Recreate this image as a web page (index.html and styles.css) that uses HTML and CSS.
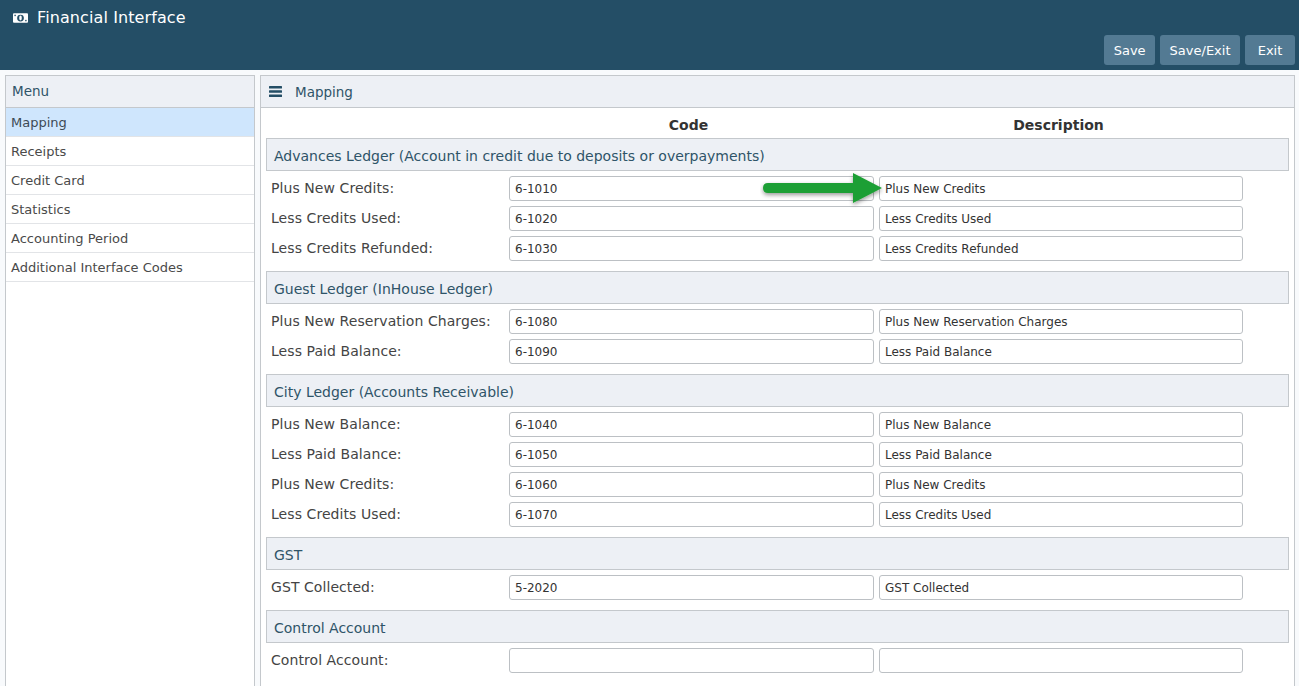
FILE: index.html
```html
<!DOCTYPE html>
<html>
  <head>
    <link rel="stylesheet" href="styles.css">
  </head>

  <body>
    <div class="topbar">
      <div class="pagetitle">
        <svg class="titleicon" viewBox="0 0 16 12">
          <rect x="0" y="1" width="16" height="10" rx="1" fill="white"/>
          <circle cx="8" cy="6" r="3.6" fill="#244e66"/>
          <ellipse cx="8" cy="6" rx="1.4" ry="2.6" fill="white"/>
          <rect x="1.5" y="2.5" width="1.5" height="1.5" fill="#244e66"/>
          <rect x="13" y="8" width="1.5" height="1.5" fill="#244e66"/>
        </svg>
        Financial Interface
      </div>
      <div class="topbuttons">
        <button class="topbutton">Save</button>
        <button class="topbutton">Save/Exit</button>
        <button class="topbutton">Exit</button>
      </div>
    </div>

    <div class="content">
      <div class="sidepanel">
        <div class="panelheader">Menu</div>
        <div class="menuitem menuitem-active">Mapping</div>
        <div class="menuitem">Receipts</div>
        <div class="menuitem">Credit Card</div>
        <div class="menuitem">Statistics</div>
        <div class="menuitem">Accounting Period</div>
        <div class="menuitem">Additional Interface Codes</div>
      </div>

      <div class="mainpanel">
        <div class="panelheader mainheader">
          <svg class="burger" viewBox="0 0 13 11">
            <rect x="0" y="0" width="13" height="2.4" rx="0.5"/>
            <rect x="0" y="4.3" width="13" height="2.4" rx="0.5"/>
            <rect x="0" y="8.6" width="13" height="2.4" rx="0.5"/>
          </svg>
          <span class="mainheadertext">Mapping</span>
        </div>

        <div class="mapping">
          <div class="columnheads">
            <div>Code</div>
            <div>Description</div>
          </div>

          <div class="sectionbar">Advances Ledger (Account in credit due to deposits or overpayments)</div>
          <div class="maprow">
            <label>Plus New Credits:</label>
            <input type="text" value="6-1010">
            <input type="text" value="Plus New Credits">
          </div>
          <div class="maprow">
            <label>Less Credits Used:</label>
            <input type="text" value="6-1020">
            <input type="text" value="Less Credits Used">
          </div>
          <div class="maprow">
            <label>Less Credits Refunded:</label>
            <input type="text" value="6-1030">
            <input type="text" value="Less Credits Refunded">
          </div>

          <div class="sectionbar">Guest Ledger (InHouse Ledger)</div>
          <div class="maprow">
            <label>Plus New Reservation Charges:</label>
            <input type="text" value="6-1080">
            <input type="text" value="Plus New Reservation Charges">
          </div>
          <div class="maprow">
            <label>Less Paid Balance:</label>
            <input type="text" value="6-1090">
            <input type="text" value="Less Paid Balance">
          </div>

          <div class="sectionbar">City Ledger (Accounts Receivable)</div>
          <div class="maprow">
            <label>Plus New Balance:</label>
            <input type="text" value="6-1040">
            <input type="text" value="Plus New Balance">
          </div>
          <div class="maprow">
            <label>Less Paid Balance:</label>
            <input type="text" value="6-1050">
            <input type="text" value="Less Paid Balance">
          </div>
          <div class="maprow">
            <label>Plus New Credits:</label>
            <input type="text" value="6-1060">
            <input type="text" value="Plus New Credits">
          </div>
          <div class="maprow">
            <label>Less Credits Used:</label>
            <input type="text" value="6-1070">
            <input type="text" value="Less Credits Used">
          </div>

          <div class="sectionbar">GST</div>
          <div class="maprow">
            <label>GST Collected:</label>
            <input type="text" value="5-2020">
            <input type="text" value="GST Collected">
          </div>

          <div class="sectionbar">Control Account</div>
          <div class="maprow">
            <label>Control Account:</label>
            <input type="text" value="">
            <input type="text" value="">
          </div>
        </div>
      </div>
    </div>

    <svg class="arrow" viewBox="0 0 130 42">
      <defs>
        <filter id="arrowshadow" x="-10%" y="-20%" width="120%" height="150%">
          <feDropShadow dx="0" dy="2" stdDeviation="2" flood-color="#000" flood-opacity="0.4"/>
        </filter>
      </defs>
      <path filter="url(#arrowshadow)" fill="#1f9f34" d="M8 13 H93 V3 L122 18 L93 33 V23 H8 Q3 23 3 18 Q3 13 8 13 Z"/>
    </svg>
  </body>
</html>
```

FILE: styles.css
```css
html, body {
  height: 100%;
}

body {
  font-family: "DejaVu Sans", sans-serif;
  font-size: 13px;
  margin: 0;
  background-color: #f8fafc;
  color: #333333;
  display: flex;
  flex-direction: column;
  overflow: hidden;
}

.topbar {
  background-color: #244e66;
  height: 70px;
  flex-shrink: 0;
  box-sizing: border-box;
  padding: 7px 4px 5px 13px;
  display: flex;
  flex-direction: column;
  justify-content: space-between;
}

.pagetitle {
  color: white;
  font-size: 16px;
  letter-spacing: 0.1px;
  line-height: 21px;
  display: flex;
  align-items: center;
  gap: 9px;
}

.titleicon {
  width: 15px;
  height: 12px;
}

.topbuttons {
  display: flex;
  justify-content: flex-end;
  gap: 5px;
}

.topbutton {
  font-family: "DejaVu Sans", sans-serif;
  font-size: 13px;
  color: white;
  background-color: #537a93;
  border: none;
  border-radius: 3px;
  height: 30px;
  min-width: 50px;
  padding: 0 9.5px;
}

.content {
  flex: 1;
  display: flex;
  gap: 5px;
  padding: 5px 4px 0 5px;
  min-height: 0;
}

.sidepanel {
  width: 250px;
  box-sizing: border-box;
  background-color: white;
  border: 1px solid #c4c8cc;
  border-bottom: none;
}

.mainpanel {
  flex: 1;
  box-sizing: border-box;
  background-color: white;
  border: 1px solid #c4c8cc;
  border-bottom: none;
}

.panelheader {
  background-color: #edf0f5;
  border-bottom: 1px solid #c4c8cc;
  height: 31px;
  line-height: 31px;
  padding-left: 6px;
  font-size: 13.5px;
  color: #2f5468;
}

.sidepanel .panelheader {
  border: 1px solid #c4c8cc;
  margin: -1px -1px 0;
}

.mainheader {
  display: flex;
  align-items: center;
  gap: 13px;
  padding-left: 8px;
  font-size: 13.5px;
}

.mainheadertext {
  padding-top: 2px;
}

.burger {
  width: 13px;
  height: 11px;
  fill: #244e66;
}

.menuitem {
  height: 28px;
  line-height: 29px;
  padding-left: 5px;
  border-bottom: 1px solid #e2e4e7;
  font-size: 13px;
  color: #4a4a4a;
}

.menuitem-active {
  background-color: #cfe6fd;
  color: #3d4a55;
}

.mapping {
  padding: 0 5px;
}

.columnheads {
  display: grid;
  grid-template-columns: 359px 359px;
  column-gap: 11px;
  padding-left: 243px;
  height: 30px;
  line-height: 35px;
  text-align: center;
  font-weight: 700;
  font-size: 14px;
}

.sectionbar {
  background-color: #edf0f5;
  border: 1px solid #c4c8cc;
  height: 29px;
  line-height: 31px;
  padding-top: 2px;
  padding-left: 7px;
  margin-bottom: 5px;
  font-size: 14px;
  color: #2f5468;
}

.maprow {
  display: grid;
  grid-template-columns: 243px 365px 364px;
  align-items: center;
  height: 25px;
  margin-bottom: 5px;
}

.maprow + .sectionbar {
  margin-top: 10px;
}

.maprow label {
  padding-left: 5px;
  padding-bottom: 2px;
  font-size: 14px;
  letter-spacing: 0.07px;
  color: #444444;
}

.maprow input {
  font-family: "DejaVu Sans", sans-serif;
  font-size: 12px;
  color: #333333;
  box-sizing: border-box;
  height: 25px;
  width: 100%;
  border: 1px solid #bcc0c4;
  border-radius: 3px;
  padding: 0 5px;
  background-color: white;
}

.maprow input + input {
  margin-left: 5px;
  width: 364px;
}

.arrow {
  position: absolute;
  left: 760px;
  top: 170px;
  width: 130px;
  height: 42px;
}
```
